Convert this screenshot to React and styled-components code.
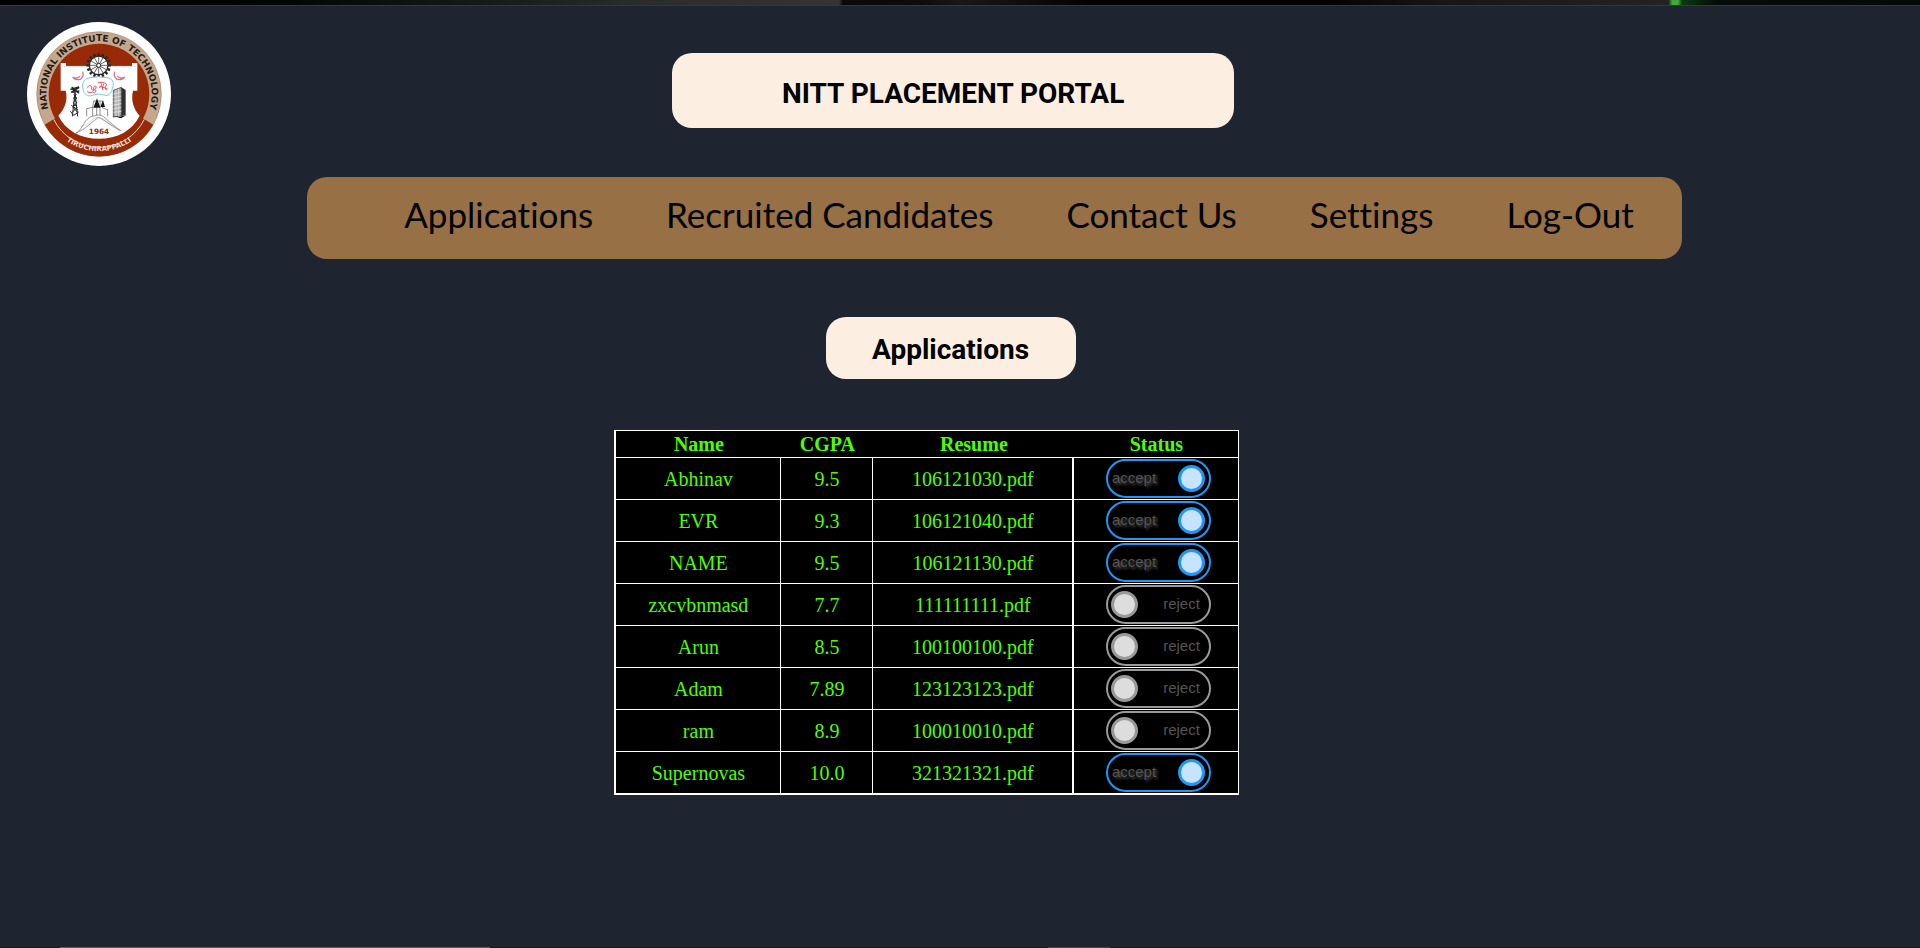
import React, { useState } from "react";
import styled, { createGlobalStyle } from "styled-components";

const GlobalStyle = createGlobalStyle`
  *, *::before, *::after { box-sizing: border-box; }
  html, body, #root { height: 100%; }
  body {
    margin: 0;
    background: #1f2431;
    font-family: "Liberation Serif", "Times New Roman", serif;
  }
`;

const Page = styled.div`
  min-height: 100%;
  display: flex;
  flex-direction: column;
`;

const TopStrip = styled.div`
  height: 6px;
  border-bottom: 1px solid #303c2c;
  background: linear-gradient(
    90deg,
    #000 0%, #030605 15%, #161918 25%, #2a2b2b 33%, #343434 43.7%,
    #0a0a0a 43.9%, #0c0c0c 48%, #181818 50%, #020202 57%, #020202 69%,
    #161616 75%, #232323 86.9%, #43a838 87.1%, #43a838 87.4%,
    #0b3a12 87.6%, #062009 88.6%, #060b09 89.5%, #050807 100%
  );
`;

const BottomStrip = styled.div`
  height: 1px;
  margin-top: auto;
  background: linear-gradient(
    90deg,
    #17181f 0 3.1%, #5c5e66 3.1% 25.5%, #17181f 25.5% 54.6%,
    #43454d 54.6% 57.8%, #17181f 57.8%
  );
`;

const Header = styled.header`
  display: grid;
  grid-template-columns: 35% auto;
  justify-content: start;
  align-items: start;
  padding-top: 16px;
`;

const LogoLink = styled.a`
  display: block;
  width: 144px;
  height: 144px;
  margin-left: 27px;

  svg { display: block; width: 100%; height: 100%; }
`;

const Plate = styled.div`
  display: flex;
  align-items: center;
  justify-content: center;
  border-radius: 20px;
  background: #fdeee2;
  color: #000;
`;

const TitlePlate = styled(Plate)`
  margin-top: 31px;
  padding: 25px 110px 18px;
`;

const SectionPlate = styled(Plate)`
  width: 250px;
  margin: 58px 0 0 43%;
  padding: 17px 0 13px;
`;

const Heading = styled.h1`
  margin: 0;
  font: 700 28px/32px Roboto, "Liberation Sans", sans-serif;
  white-space: nowrap;
`;

const Nav = styled.nav`
  width: fit-content;
  margin: 11px 0 0 16%;
  padding: 15px 48px 23px 97px;
  border-radius: 20px;
  background: #977045;
`;

const NavList = styled.ul`
  display: flex;
  gap: 73px;
  margin: 0;
  padding: 0;
  list-style: none;
`;

const NavLink = styled.a`
  font: 400 35px/44px Lato, "Liberation Sans", sans-serif;
  font-variant-ligatures: none;
  color: #000;
  text-decoration: none;
  white-space: nowrap;
`;

const Table = styled.table`
  width: 625px;
  margin: 51px 0 0 32%;
  table-layout: fixed;
  border-collapse: separate;
  border-spacing: 0;
  border: 1px solid #fff;
  border-width: 1px 1px 1px 2px;
  background: #000;
  color: #4cff00;
  font-size: 20px;
  line-height: 24px;
  text-align: center;
`;

const Column = styled.col`
  width: ${(p) => p.$width};
`;

const HeadCell = styled.th`
  height: 27px;
  padding: 0;
  border-bottom: 1px solid #fff;
`;

const Cell = styled.td`
  height: 42px;
  padding: 0;
  border-bottom: 1px solid #fff;
  border-right: ${(p) => p.$divider || 0}px solid #fff;
`;

const Switch = styled.label`
  position: relative;
  display: flex;
  align-items: center;
  justify-content: ${(p) => (p.$on ? "flex-start" : "flex-end")};
  width: 105px;
  height: 39px;
  margin: 0 auto;
  padding: 0 9px 2px 4px;
  border: 2px solid ${(p) => (p.$on ? "#2196f3" : "#999")};
  border-radius: 20px;
  color: #555;
  font: 15px/18px "Liberation Sans", Arial, sans-serif;
  text-shadow: ${(p) => (p.$on ? "2px 2px 3px #555" : "none")};
  cursor: pointer;
`;

const SwitchInput = styled.input`
  position: absolute;
  top: 4px;
  left: ${(p) => (p.checked ? 70 : 3)}px;
  appearance: none;
  width: 27px;
  height: 27px;
  margin: 0;
  border: 3px solid ${(p) => (p.checked ? "#2196f3" : "#999")};
  border-radius: 50%;
  background: ${(p) => (p.checked ? "#c6e4ff" : "#ddd")};
  cursor: pointer;
`;

const SwitchCell = styled(Cell)`
  padding-left: 4px;
`;

function Emblem() {
  const spokes = [0, 30, 60, 90, 120, 150];
  const teeth = Array.from({ length: 16 }, (_, i) => i * 22.5);
  return (
    <svg viewBox="0 0 432 432" role="img" aria-label="National Institute of Technology, Tiruchirappalli">
      <defs>
        <path id="ring-top" d="M77 291A158 158 0 1 1 355 291" />
        <path id="ring-bottom" d="M60 288A172 172 0 0 0 372 288" />
      </defs>
      <circle cx="216" cy="216" r="216" fill="#fff" />
      <circle cx="216" cy="216" r="187" fill="#c5a78d" stroke="#6b3a22" strokeWidth="1" />
      <path d="M53 308A187 187 0 0 0 379 308L340 284H92Z" fill="#982a07" />
      <circle cx="216" cy="216" r="151" fill="#982a07" />
      <path d="M80 292A152 152 0 0 0 352 292" fill="none" stroke="#ecd8cb" strokeWidth="3" />
      <path d="M101 123h16v9h198v-9h16v83h-13c-7 30 2 55 20 75C316 326 271 350 216 350S116 326 94 281c18-20 30-45 22-75h-15z" fill="#fff" />
      <path d="M101 133h231" stroke="#ccc" strokeWidth="2" />
      <g stroke="#292929" fill="none">
        {teeth.map((a) => (
          <path key={a} d="M215 93v9" strokeWidth="7" transform={`rotate(${a} 215 130)`} />
        ))}
        <circle cx="215" cy="130" r="28" fill="#fff" strokeWidth="4" />
        {spokes.map((a) => (
          <path key={a} d="M215 104v52" strokeWidth="2" transform={`rotate(${a} 215 130)`} />
        ))}
        <circle cx="215" cy="130" r="6" fill="#fff" strokeWidth="3" />
      </g>
      <path d="M185 168q30-8 59 0c17 4 17 20 12 32-4 14-11 24-25 19q-18-7-35 1c-14 6-25-4-28-18-4-14 1-31 17-34Z" fill="#fff" stroke="#7cc5d8" strokeWidth="3" />
      <g fill="none" stroke="#e0525a" strokeWidth="3">
        <path d="M182 197c0-9 15-7 12 1s10 9 13 0-9-8-7 3-16 16-19 5M206 203c3 8-5 12-8 7" />
        <path d="M212 183q14-7 28 5M221 182q8 12-5 14M230 185q-7 15-2 20M238 189q-6 8 0 16M218 193l23 7" />
      </g>
      <g fill="none" stroke="#e56c94" strokeWidth="4">
        <path d="M167 149c4 13-2 24-13 24-8 0-14-4-17-8 8 5 18 3 22-3M263 149c-4 13 2 24 13 24 8 0 14-4 17-8-8 5-18 3-22-3" />
      </g>
      <g fill="none" stroke="#252525" strokeWidth="3">
        <path d="M136 283l8-72 8 72M137 270l13-14-11-14 10-14-9-11M151 270l-13-14 11-14-9-14 8-11" />
        <path d="M130 202l26-7-20 16 21-4M132 211l25-15M134 195l22 19" strokeWidth="4" />
        <path d="M130 268l10 12 15-10M133 250l20 14" />
      </g>
      <path d="M259 205l24-9v86l-24 3z" fill="#aaa" stroke="#292929" strokeWidth="2" />
      <path d="M283 196l13 8v74l-13 5z" fill="#303030" />
      <path d="M259 216l24-6M259 227l24-5M259 238l24-4M259 249l24-4M259 260l24-4M259 271l24-3M267 203v80M275 200v82" stroke="#eee" strokeWidth="2" />
      <path d="M256 281l20 4 24-7-18 11z" fill="#111" />
      <path d="M179 283v-23l18-4 3-19h27v21l15 5v20M197 256v27M209 238v43M219 238v41" fill="#fff" stroke="#555" strokeWidth="2" />
      <path d="M199 257l11-28 10 28zM220 255l8-20 6 20z" fill="#151515" />
      <path d="M146 334c27-15 21-47 57-53 15-5 25 0 35 10 12 11 23 21 43 35-35-16-49-35-67-39-21 13-37 34-68 47Z" fill="#fff" stroke="#666" strokeWidth="2" />
      <path d="M160 313c25-1 33-25 54-28 21 4 29 20 51 27" fill="none" stroke="#999" />
      <text x="216" y="337" fontSize="22" fontFamily="DejaVu Sans" fontWeight="700" textAnchor="middle" fill="#982a07">1964</text>
      <text fontSize="27" fontFamily="DejaVu Sans" fontWeight="700" textAnchor="middle" fill="#211d1b">
        <textPath href="#ring-top" startOffset="50%">NATIONAL INSTITUTE OF TECHNOLOGY</textPath>
      </text>
      <text fontSize="21" fontFamily="DejaVu Sans" fontWeight="700" textAnchor="middle" fill="#f2ded2">
        <textPath href="#ring-bottom" startOffset="50%">TIRUCHIRAPPALLI</textPath>
      </text>
    </svg>
  );
}

const navItems = ["Applications", "Recruited Candidates", "Contact Us", "Settings", "Log-Out"];

const initialRows = [
  { name: "Abhinav", cgpa: "9.5", resume: "106121030.pdf", accepted: true },
  { name: "EVR", cgpa: "9.3", resume: "106121040.pdf", accepted: true },
  { name: "NAME", cgpa: "9.5", resume: "106121130.pdf", accepted: true },
  { name: "zxcvbnmasd", cgpa: "7.7", resume: "111111111.pdf", accepted: false },
  { name: "Arun", cgpa: "8.5", resume: "100100100.pdf", accepted: false },
  { name: "Adam", cgpa: "7.89", resume: "123123123.pdf", accepted: false },
  { name: "ram", cgpa: "8.9", resume: "100010010.pdf", accepted: false },
  { name: "Supernovas", cgpa: "10.0", resume: "321321321.pdf", accepted: true },
];

export default function App() {
  const [rows, setRows] = useState(initialRows);
  const toggle = (index) =>
    setRows(rows.map((r, i) => (i === index ? { ...r, accepted: !r.accepted } : r)));

  return (
    <Page>
      <GlobalStyle />
      <TopStrip />
      <Header>
        <LogoLink href="#"><Emblem /></LogoLink>
        <TitlePlate><Heading>NITT PLACEMENT PORTAL</Heading></TitlePlate>
      </Header>
      <Nav>
        <NavList>
          {navItems.map((item) => (
            <li key={item}><NavLink href="#">{item}</NavLink></li>
          ))}
        </NavList>
      </Nav>
      <main>
        <SectionPlate><Heading as="h2">Applications</Heading></SectionPlate>
        <Table>
          <colgroup>
            <Column $width="165px" />
            <Column $width="92px" />
            <Column $width="201px" />
            <Column />
          </colgroup>
          <thead>
            <tr>
              <HeadCell>Name</HeadCell>
              <HeadCell>CGPA</HeadCell>
              <HeadCell>Resume</HeadCell>
              <HeadCell>Status</HeadCell>
            </tr>
          </thead>
          <tbody>
            {rows.map((row, i) => (
              <tr key={row.resume}>
                <Cell $divider={1}>{row.name}</Cell>
                <Cell $divider={1}>{row.cgpa}</Cell>
                <Cell $divider={2}>{row.resume}</Cell>
                <SwitchCell>
                  <Switch $on={row.accepted}>
                    <SwitchInput type="checkbox" checked={row.accepted} onChange={() => toggle(i)} />
                    {row.accepted ? "accept" : "reject"}
                  </Switch>
                </SwitchCell>
              </tr>
            ))}
          </tbody>
        </Table>
      </main>
      <BottomStrip />
    </Page>
  );
}
